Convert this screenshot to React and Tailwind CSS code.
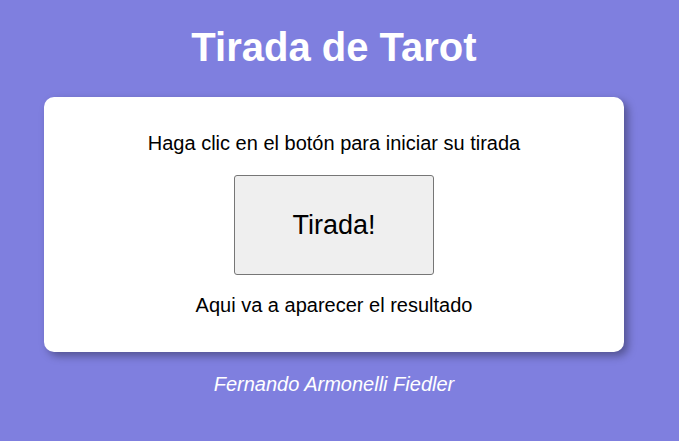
export default function App() {
  return (
    <div className="min-h-[441px] w-full bg-[#7f7fdf] font-['Liberation_Sans',Arial,sans-serif]">
      <div className="w-[668px] flex flex-col items-center pt-[24px]">
        {/* Title */}
        <h1 className="text-[40px] leading-[46px] font-bold text-white">Tirada de Tarot</h1>

        {/* Card */}
        <div className="mt-[27px] w-[580px] h-[255px] bg-white rounded-[10px] shadow-[4px_4px_8px_rgba(0,0,0,0.35)] flex flex-col items-center pt-[35px] text-black">
          <p className="text-[20px] leading-[23px]">Haga clic en el botón para iniciar su tirada</p>
          <button className="mt-[20px] w-[200px] h-[100px] bg-[#efefef] border border-[#767676] rounded-[3px] text-[27px] text-black">
            Tirada!
          </button>
          <p className="mt-[19px] text-[20px] leading-[23px]">Aqui va a aparecer el resultado</p>
        </div>

        {/* Footer */}
        <p className="mt-[21px] text-[20px] leading-[23px] italic text-white">Fernando Armonelli Fiedler</p>
      </div>
    </div>
  )
}
